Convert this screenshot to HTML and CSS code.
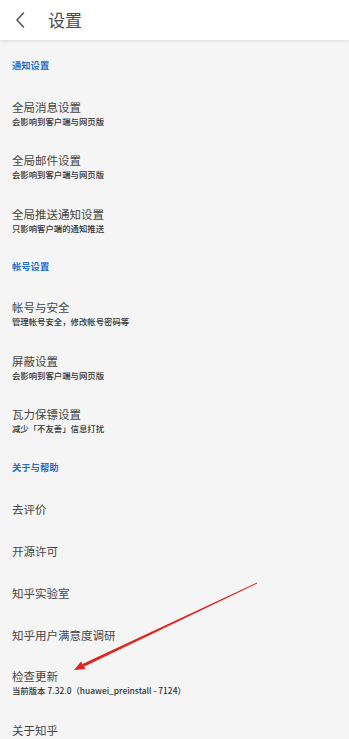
FILE: index.html
```html
<!DOCTYPE html>
<html lang="zh">
<head>
<meta charset="utf-8">
<link rel="stylesheet" href="styles.css">
</head>
<body>
<div class="page">
  <header class="topbar">
    <svg class="back" width="10" height="16" viewBox="0 0 10 16"><path d="M8.5 1 L2 8 L8.5 15" fill="none" stroke="#555" stroke-width="1.6" stroke-linecap="round" stroke-linejoin="round"/></svg>
    <div class="title">设置</div>
  </header>
  <main class="list">
    <div class="section first">通知设置</div>
    <div class="item two"><div class="t">全局消息设置</div><div class="s">会影响到客户端与网页版</div></div>
    <div class="item two"><div class="t">全局邮件设置</div><div class="s">会影响到客户端与网页版</div></div>
    <div class="item two"><div class="t">全局推送通知设置</div><div class="s">只影响客户端的通知推送</div></div>
    <div class="section">帐号设置</div>
    <div class="item two"><div class="t">帐号与安全</div><div class="s">管理帐号安全，修改帐号密码等</div></div>
    <div class="item two"><div class="t">屏蔽设置</div><div class="s">会影响到客户端与网页版</div></div>
    <div class="item two"><div class="t">瓦力保镖设置</div><div class="s">减少「不友善」信息打扰</div></div>
    <div class="section">关于与帮助</div>
    <div class="item one"><div class="t">去评价</div></div>
    <div class="item one"><div class="t">开源许可</div></div>
    <div class="item one"><div class="t">知乎实验室</div></div>
    <div class="item one"><div class="t">知乎用户满意度调研</div></div>
    <div class="item two"><div class="t">检查更新</div><div class="s">当前版本 7.32.0（huawei_preinstall - 7124）</div></div>
    <div class="item one"><div class="t">关于知乎</div></div>
  </main>
  <svg class="arrow" width="349" height="739" viewBox="0 0 349 739">
    <polygon points="257.2,583.4 256.8,582.6 82.5,664.0 83.8,666.8" fill="#e3231f"/>
    <polygon points="74,670 81,661.5 85.5,669" fill="#e3231f"/>
  </svg>
</div>
</body>
</html>
```

FILE: styles.css
```css
html, body {
  margin: 0;
  padding: 0;
  background: #f5f5f5;
}
body {
  font-family: "Noto Sans CJK SC", "Noto Sans", sans-serif;
  width: 349px;
  height: 739px;
  overflow: hidden;
}
.page {
  position: relative;
  width: 349px;
  height: 739px;
}
.topbar {
  height: 40px;
  background: #ffffff;
  display: flex;
  align-items: center;
  box-shadow: 0 1px 4px rgba(0, 0, 0, 0.10);
  position: relative;
  z-index: 1;
}
.back {
  margin-left: 15px;
  margin-top: 0px;
}
.title {
  margin-left: 23px;
  font-size: 17px;
  color: #4a4a4a;
  line-height: 1;
  margin-top: -2px;
}
.list {
  display: flex;
  flex-direction: column;
}
.section {
  height: 40px;
  box-sizing: border-box;
  padding-left: 12px;
  padding-top: 13px;
  font-size: 9.3px;
  font-weight: 700;
  color: #1f6fc9;
  line-height: 12px;
}
.section.first {
  height: 46.5px;
  padding-top: 19px;
}
.item {
  box-sizing: border-box;
  padding-left: 12px;
  display: flex;
  flex-direction: column;
  justify-content: center;
}
.item.two {
  height: 53.5px;
}
.item.one {
  height: 42px;
}
.t {
  font-size: 11.5px;
  color: #454545;
  line-height: 14px;
}
.s {
  font-size: 8.4px;
  color: #333333;
  line-height: 12px;
  margin-top: 1px;
  font-weight: 500;
}
.arrow {
  position: absolute;
  left: 0;
  top: 0;
  pointer-events: none;
  z-index: 2;
}
```
